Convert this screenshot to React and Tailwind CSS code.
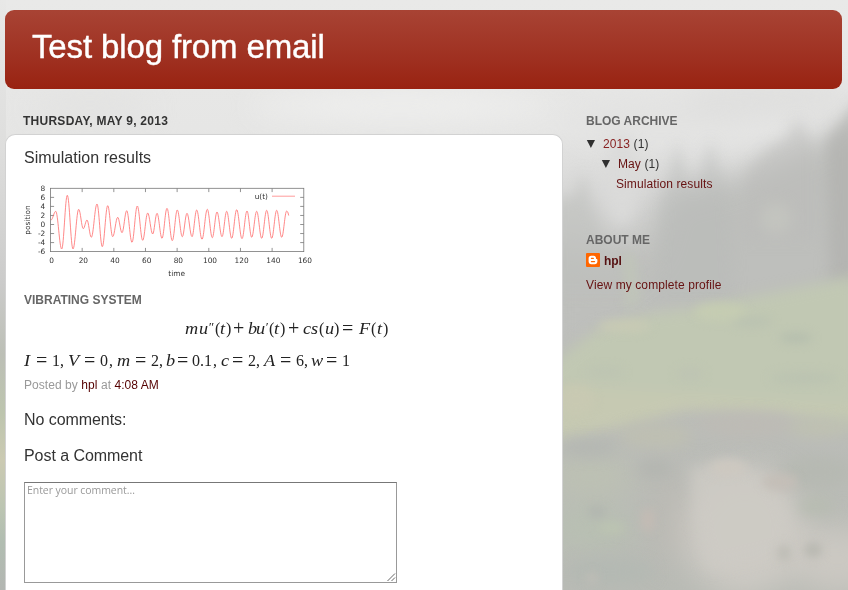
import React from 'react';

// Turning points of u(t) in plot pixels
const EXTREMA = [
  [51, 220], [55.7, 211.3], [61.7, 249], [67.3, 195.3], [73, 249], [78.7, 209.3], [83.3, 228.7],
  [87, 220], [91.3, 237.3], [97, 204], [102.3, 246.7], [107.7, 205.7], [112.7, 236.7], [117.7, 217.3],
  [122, 232.7], [126.7, 210.7], [132, 242.3], [137.3, 206], [142.7, 240.3], [147.7, 213], [152.7, 234],
  [157, 213.3], [162, 238.3], [167, 208.3], [172.3, 240.7], [177.3, 210], [182.3, 236.7], [187, 213.3],
  [192, 236.7], [196.7, 210], [202, 239.3], [207.3, 209.3], [212.3, 237.7], [217, 212], [222, 236.7],
  [226.7, 211.3], [231.7, 238.3], [236.7, 209.7], [242, 238.7], [247, 211], [251.7, 237.3],
  [256.7, 211.3], [261.7, 238.3], [266.7, 210.3], [271.7, 238.3], [276.7, 210.3], [281.7, 237.3], [286.7, 211],
];

const CURVE =
  EXTREMA.map(([x, y], i) => {
    if (i === 0) return `M${x} ${y}`;
    const [px, py] = EXTREMA[i - 1];
    const d = (x - px) * 0.37;
    return `C${px + d} ${py} ${x - d} ${y} ${x} ${y}`;
  }).join(' ') + ' Q288 211 288.7 215.5';

function Chart() {
  const xs = [0, 20, 40, 60, 80, 100, 120, 140, 160];
  const ys = [8, 6, 4, 2, 0, -2, -4, -6];
  return (
    <svg className="block h-[96px] w-[295px]" viewBox="24 182 295 96" fontFamily="DejaVu Sans, sans-serif" fontSize="7.4" fill="#333">
      <g stroke="#777" strokeWidth="0.8" fill="none">
        <rect x="50.5" y="188.3" width="253.3" height="63.3" />
        {xs.slice(1, 8).map((v) => (
          <path key={v} d={`M${50.5 + v * 1.583} 188.5v3.6M${50.5 + v * 1.583} 251.5v-3.6`} />
        ))}
        {ys.slice(1, 7).map((v) => (
          <path key={v} d={`M50.5 ${224.5 - v * 4.52}h3.6M303.8 ${224.5 - v * 4.52}h-3.6`} />
        ))}
      </g>
      {xs.map((v) => (
        <text key={v} x={51.7 + v * 1.583} y="263" textAnchor="middle">{v}</text>
      ))}
      {ys.map((v) => (
        <text key={v} x="45.3" y={227.2 - v * 4.52} textAnchor="end">{v}</text>
      ))}
      <text x="176.7" y="276" textAnchor="middle">time</text>
      <text transform="translate(30 220) rotate(-90)" textAnchor="middle">position</text>
      <text x="268" y="198.5" textAnchor="end">u(t)</text>
      <path d="M272 196.2h23" stroke="#ff9b9b" strokeWidth="1" />
      <path d={CURVE} fill="none" stroke="#ff7474" strokeWidth="0.85" />
    </svg>
  );
}

const IT = 'italic origin-left scale-x-[1.14]';
const PR = 'italic text-[13px] -translate-y-[3px]';
const OP = 'text-[20px] translate-y-[1px]';
const UP = '';
const EQUATION = [
  ['m', 'w-[14px]', IT], ['u', 'w-[9px]', IT], ['″', 'w-[7px]', PR], ['(', 'w-[5px]', UP], ['t', 'w-[6px]', IT], [')', 'w-[7px]', UP],
  ['+', 'w-[15px]', OP], ['b', 'w-[8px]', IT], ['u', 'w-[9px]', IT], ['′', 'w-[4px]', PR], ['(', 'w-[5px]', UP], ['t', 'w-[6px]', IT], [')', 'w-[8px]', UP],
  ['+', 'w-[15px]', OP], ['c', 'w-[8px]', IT], ['s', 'w-[8px]', IT], ['(', 'w-[6px]', UP], ['u', 'w-[9px]', IT], [')', 'w-[8px]', UP],
  ['=', 'w-[17px]', OP], ['F', 'w-[12px]', IT], ['(', 'w-[6px]', UP], ['t', 'w-[6px]', IT], [')', 'w-[6px]', UP],
];
const PARAMS = [
  ['I', 'w-[12px]', IT], ['=', 'w-[16px]', OP], ['1', 'w-[8px]', UP], [',', 'w-[8px]', UP],
  ['V', 'w-[16px]', IT], ['=', 'w-[16px]', OP], ['0', 'w-[9px]', UP], [',', 'w-[8px]', UP],
  ['m', 'w-[18px]', IT], ['=', 'w-[16px]', OP], ['2', 'w-[8px]', UP], [',', 'w-[7px]', UP],
  ['b', 'w-[11px]', IT], ['=', 'w-[15px]', OP], ['0.1', 'w-[21px]', UP], [',', 'w-[8px]', UP],
  ['c', 'w-[11px]', IT], ['=', 'w-[16px]', OP], ['2', 'w-[8px]', UP], [',', 'w-[8px]', UP],
  ['A', 'w-[16px]', IT], ['=', 'w-[16px]', OP], ['6', 'w-[8px]', UP], [',', 'w-[7px]', UP],
  ['w', 'w-[15px]', IT], ['=', 'w-[16px]', OP], ['1', 'w-[8px]', UP],
];

function MathRow({ tokens, className }) {
  return (
    <div className={`flex h-5 items-baseline whitespace-nowrap font-['Liberation_Serif',serif] text-[16px] leading-5 text-[#222] ${className}`}>
      {tokens.map(([t, w, s], i) => (
        <span key={i} className={`${w} ${s} shrink-0 leading-5`}>{t}</span>
      ))}
    </div>
  );
}

function Backdrop() {
  return (
    <svg className="absolute inset-0 h-[590px] w-[848px]" viewBox="0 0 848 590" aria-hidden="true">
      <defs>
        <linearGradient id="sky" x1="0" y1="0" x2="0" y2="1">
          <stop offset="0" stopColor="#e9e9e8" />
          <stop offset="0.22" stopColor="#e6e6e5" />
          <stop offset="0.33" stopColor="#d7d7d6" />
          <stop offset="0.48" stopColor="#bdbebb" />
          <stop offset="1" stopColor="#b9bbb5" />
        </linearGradient>
        <linearGradient id="edge" x1="0" y1="0" x2="0" y2="1">
          <stop offset="0" stopColor="#e8e8e7" />
          <stop offset="0.25" stopColor="#dededd" />
          <stop offset="0.48" stopColor="#cbcbca" />
          <stop offset="0.6" stopColor="#bcbfb6" />
          <stop offset="0.7" stopColor="#bdc5ae" />
          <stop offset="0.78" stopColor="#cbcab2" />
          <stop offset="0.86" stopColor="#bcc5b2" />
          <stop offset="0.92" stopColor="#b1bdb1" />
          <stop offset="1" stopColor="#b3b6b2" />
        </linearGradient>
        <filter id="b4" x="-100%" y="-150%" width="300%" height="400%" colorInterpolationFilters="sRGB"><feGaussianBlur stdDeviation="5" /></filter>
        <filter id="b8" x="-40%" y="-40%" width="180%" height="180%" colorInterpolationFilters="sRGB"><feGaussianBlur stdDeviation="7" /></filter>
        <filter id="b14" x="-50%" y="-50%" width="200%" height="200%" colorInterpolationFilters="sRGB"><feGaussianBlur stdDeviation="15" /></filter>
      </defs>
      <rect width="848" height="590" fill="url(#sky)" />
      <g filter="url(#b14)">
        <ellipse cx="400" cy="106" rx="150" ry="14" fill="#efefee" />
        <ellipse cx="90" cy="108" rx="60" ry="14" fill="#e2e2e1" />
        <ellipse cx="660" cy="120" rx="90" ry="22" fill="#e2e2e1" />
        <ellipse cx="770" cy="100" rx="90" ry="18" fill="#dededd" />
        <path d="M650 250l15-55 75-20 70-30 70-30v230H540v-90l70 30z" fill="#bebfbc" />
      </g>
      <g filter="url(#b8)">
        <ellipse cx="622" cy="180" rx="18" ry="46" fill="#dadad9" opacity="0.9" />
        <path d="M553 200l22-4 8-26 10 40 14 36 34 10v40h-90z" fill="#bebfbc" opacity="0.6" />
        <path d="M655 300l6-100 16-58 16 48 18-50 18 58 6 102z" fill="#b9bab7" opacity="0.45" />
        <path d="M742 240l6-70 20-22 16-8 14-22 18 30v92z" fill="#bbbcb9" opacity="0.5" />
        <path d="M826 140l36-44v190h-32z" fill="#b0b1ae" opacity="0.7" />
        <ellipse cx="776" cy="218" rx="16" ry="16" fill="#c4c6c1" opacity="0.8" />
      </g>
      <g filter="url(#b8)">
        <path d="M540 372l56-42 50-16 60-8 60-12 90-18v150l-90-14-130-4-46 26-50 8z" fill="#c1c8b3" />
        <path d="M545 384l75 6 90 6 70 6 86 4v10l-100-2-80-4-56 16-85 14z" fill="#c6c9b2" />
      </g>
      <g filter="url(#b4)">
        <path d="M622 256l12-4 7 50-16 8z" fill="#c0c6b8" opacity="0.7" />
        <ellipse cx="720" cy="312" rx="26" ry="9" fill="#c5ccb2" />
        <ellipse cx="624" cy="326" rx="26" ry="6" fill="#c8cab4" />
        <ellipse cx="605" cy="372" rx="18" ry="5" fill="#bdc4b2" />
        <ellipse cx="690" cy="374" rx="14" ry="6" fill="#bec4b3" />
        <ellipse cx="752" cy="322" rx="20" ry="5" fill="#bac2b1" />
        <ellipse cx="796" cy="338" rx="16" ry="5" fill="#b5beae" />
        <ellipse cx="804" cy="378" rx="34" ry="6" fill="#bbc3b1" />
        <ellipse cx="576" cy="400" rx="18" ry="14" fill="#c8c9b2" />
      </g>
      <g filter="url(#b14)">
        <ellipse cx="590" cy="476" rx="46" ry="16" fill="#bdc2b2" />
        <ellipse cx="590" cy="528" rx="44" ry="20" fill="#b8c0b2" />
        <ellipse cx="745" cy="532" rx="62" ry="64" fill="#cdcac4" />
        <ellipse cx="838" cy="560" rx="46" ry="34" fill="#cbc8c2" />
        <ellipse cx="670" cy="516" rx="14" ry="50" fill="#bbb9b3" />
      </g>
      <g filter="url(#b8)">
        <ellipse cx="748" cy="425" rx="50" ry="12" fill="#bdbbb5" />
        <ellipse cx="656" cy="436" rx="36" ry="12" fill="#bebfb2" />
        <ellipse cx="820" cy="428" rx="32" ry="8" fill="#bfc1b1" />
        <ellipse cx="590" cy="448" rx="28" ry="8" fill="#b4b7b2" />
        <ellipse cx="655" cy="469" rx="18" ry="9" fill="#b3b5b0" />
        <path d="M690 468l40-8 36 16 20 30 2 44-80 20-12-50z" fill="#cdcac4" opacity="0.8" />
        <ellipse cx="818" cy="472" rx="36" ry="16" fill="#b6b9b2" />
        <ellipse cx="816" cy="506" rx="18" ry="9" fill="#b7bcb1" />
        <ellipse cx="610" cy="572" rx="44" ry="14" fill="#b4b9b3" />
      </g>
      <g filter="url(#b4)">
        <ellipse cx="648" cy="520" rx="7" ry="12" fill="#c3bbb4" />
        <ellipse cx="597" cy="512" rx="9" ry="6" fill="#b1b5af" />
        <ellipse cx="612" cy="528" rx="14" ry="5" fill="#bcc4b1" />
        <ellipse cx="728" cy="468" rx="18" ry="8" fill="#cdc8c0" />
        <ellipse cx="780" cy="482" rx="18" ry="8" fill="#c4beb7" />
        <ellipse cx="813" cy="550" rx="9" ry="7" fill="#b7b7b0" />
        <ellipse cx="784" cy="553" rx="7" ry="8" fill="#bdbcb5" />
        <ellipse cx="592" cy="578" rx="6" ry="5" fill="#c1beb7" />
      </g>
      <rect width="6" height="590" fill="url(#edge)" />
    </svg>
  );
}

function BloggerIcon() {
  return (
    <svg className="h-[14px] w-[14px]" viewBox="0 0 14 14">
      <rect width="14" height="14" rx="1" fill="#ff6600" />
      <path d="M5.2 2.7h2.4c1.5 0 2.4 1 2.4 2.3 0 .8.2 1 .7 1 .5 0 .7.3.7.8v1.7c0 1.6-1.1 2.8-2.7 2.8H5.2c-1.5 0-2.6-1.2-2.6-2.7V5.3c0-1.5 1.1-2.6 2.6-2.6z" fill="#fff" />
      <path d="M5.4 5.3h2M5.4 8.6h3.2" stroke="#ff6600" strokeWidth="1.2" strokeLinecap="round" />
    </svg>
  );
}

function Arrow() {
  return <svg className="h-[8px] w-[10px]" viewBox="0 0 10 8"><path d="M0.8 0h8.2L4.9 8z" fill="#303030" /></svg>;
}

export default function App() {
  return (
    <div className="relative h-[590px] w-[848px] overflow-hidden bg-[#c0c1bd] font-['Liberation_Sans',Arial,sans-serif] text-[12px] text-[#333]">
      <Backdrop />
      <div className="relative flex h-full flex-col pl-[5px] pr-[6px] pt-[10px]">
        <header className="flex h-[79px] shrink-0 rounded-[9px] bg-linear-to-b from-[#a84334] to-[#992211] pl-[27px] pt-[18px]">
          <h1 className="text-[33px] leading-[38px] tracking-[-0.13px] text-white [-webkit-text-stroke:0.4px_white]">Test blog from email</h1>
        </header>
        <div className="flex flex-1">
          <main className="flex w-[558px] shrink-0 flex-col">
            <h2 className="ml-[18px] mt-[25px] h-[14px] text-[12px] font-bold leading-[14px] tracking-[0.26px]">THURSDAY, MAY 9, 2013</h2>
            <article className="mt-[6px] flex flex-1 flex-col rounded-t-[10px] border border-b-0 border-[#d2d2d2] bg-white pl-[18px]">
              <h3 className="mt-[14px] text-[16px] leading-[18px] tracking-[0.05px]">Simulation results</h3>
              <div className="mt-[15px]"><Chart /></div>
              <h4 className="mt-[15px] text-[12px] font-bold leading-[14px] text-[#666]">VIBRATING SYSTEM</h4>
              <MathRow tokens={EQUATION} className="ml-[161px] mt-[10px]" />
              <MathRow tokens={PARAMS} className="mt-[12px]" />
              <p className="mt-[9px] leading-[14px] tracking-[0.06px] text-[#999]">
                Posted by <a className="text-[#550000]">hpl</a> at <a className="text-[#550000]">4:08 AM</a>
              </p>
              <h4 className="mt-[19px] text-[16px] leading-[18px] tracking-[-0.06px]">No comments:</h4>
              <h4 className="mt-[18px] text-[16px] leading-[18px] tracking-[-0.06px]">Post a Comment</h4>
              <div className="mt-[17px] flex h-[101px] w-[373px] justify-between border border-[#999] border-t-[#777] bg-white pl-[2px]">
                <span className="font-['Open_Sans',sans-serif] text-[10.5px] leading-[14px] tracking-[-0.06px] text-[#999]">Enter your comment...</span>
                <svg className="h-[9px] w-[9px] self-end" viewBox="0 0 9 9"><path d="M0.5 8L8 0.5M4.5 8L8 4.5" stroke="#555" strokeWidth="0.9" /></svg>
              </div>
            </article>
          </main>
          <aside className="ml-[23px] flex flex-col tracking-[0.1px]">
            <h2 className="mt-[25px] text-[12px] font-bold leading-[14px] tracking-normal text-[#666]">BLOG ARCHIVE</h2>
            <div className="mt-[6px] flex flex-col leading-5">
              <div className="flex h-5 items-center">
                <Arrow /><span className="ml-[7px]"><a className="text-[#882222]">2013</a> (1)</span>
              </div>
              <div className="ml-[15px] flex h-5 items-center">
                <Arrow /><span className="ml-[7px]"><a className="text-[#661111]">May</a> (1)</span>
              </div>
              <a className="ml-[30px] h-5 text-[#661111]">Simulation results</a>
            </div>
            <h2 className="mt-[39px] text-[12px] font-bold leading-[14px] tracking-normal text-[#666]">ABOUT ME</h2>
            <div className="mt-[5px] flex h-[16px] items-center gap-[4px]">
              <BloggerIcon /><a className="pt-[2px] font-bold leading-[14px] tracking-[-0.1px] text-[#551111]">hpl</a>
            </div>
            <a className="mt-[9px] leading-[16px] text-[#661111]">View my complete profile</a>
          </aside>
        </div>
      </div>
    </div>
  );
}
